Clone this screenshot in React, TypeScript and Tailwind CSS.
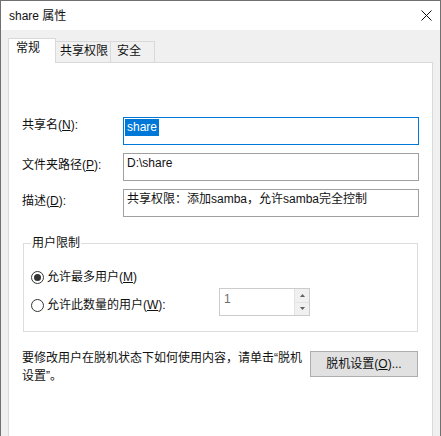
const Key = ({ k }: { k: string }) => <span className="underline underline-offset-1">{k}</span>;

const Radio = ({ checked }: { checked?: boolean }) => (
  <span className="w-[13px] h-[13px] shrink-0 rounded-full border border-[#333333] bg-white flex items-center justify-center">
    {checked && <span className="w-[7px] h-[7px] rounded-full bg-[#333333]" />}
  </span>
);

const Field = ({ children, focused }: { children: React.ReactNode; focused?: boolean }) => (
  <div
    className={`h-[28px] border bg-white pl-[1px] pt-[1px] whitespace-nowrap overflow-hidden ${
      focused ? "border-[#0078d7]" : "border-[#a0a0a0]"
    }`}
  >
    {children}
  </div>
);

const App = () => {
  return (
    <div className="w-[441px] h-[436px] overflow-hidden border-x border-t border-[#707070] bg-[#f0f0f0] flex flex-col text-[12px] leading-4 text-[#111] font-[Liberation_Sans,Noto_Sans_CJK_SC,sans-serif]">
      <div className="h-[29px] shrink-0 bg-white flex items-center justify-between pl-[8px] pr-[8px]">
        <span>share 属性</span>
        <svg width="11" height="11" viewBox="0 0 11 11">
          <path d="M0.5 0.5L10.5 10.5M10.5 0.5L0.5 10.5" stroke="#111" strokeWidth="1" />
        </svg>
      </div>

      <div className="flex-1 min-h-0 flex flex-col px-[7px] pt-[8px]">
        <div className="flex items-end h-[24px] shrink-0">
          <div className="relative z-10 -mb-px h-[25px] w-[48px] bg-white border-x border-t border-[#d9d9d9] pl-[7px] pt-[1px]">
            常规
          </div>
          <div className="h-[21px] w-[55px] border-t border-r border-[#d9d9d9] pl-[4px] pt-[1px]">共享权限</div>
          <div className="h-[21px] w-[44px] border-t border-r border-[#d9d9d9] pl-[6px] pt-[1px]">安全</div>
        </div>

        <div className="flex-1 bg-white border-x border-t border-[#d9d9d9] px-[13px] pt-[54px]">
          <div className="grid grid-cols-[101px_1fr] gap-y-[8px]">
            <div className="pt-0">
              共享名(<Key k="N" />):
            </div>
            <Field focused>
              <span className="inline-block px-[2px] leading-[17px] bg-[#0078d7] text-white">share</span>
            </Field>

            <div className="pt-[4px]">
              文件夹路径(<Key k="P" />):
            </div>
            <Field>
              <span className="inline-block px-[2px] leading-[17px]">D:\share</span>
            </Field>

            <div className="pt-[4px]">
              描述(<Key k="D" />):
            </div>
            <Field>
              <span className="inline-block px-[2px] leading-[17px]">共享权限：添加samba，允许samba完全控制</span>
            </Field>
          </div>

          <fieldset className="mt-[18px] mx-px border border-[#dcdcdc] px-[7px] pb-[15px]">
            <legend className="px-[1px] leading-4">用户限制</legend>
            <div className="mt-[18px] h-[16px] flex items-center gap-[3px]">
              <Radio checked />
              <span>
                允许最多用户(<Key k="M" />)
              </span>
            </div>
            <div className="mt-[3px] flex">
              <div className="w-[188px] pt-[9px]">
                <div className="h-[16px] flex items-center gap-[3px]">
                  <Radio />
                  <span>
                    允许此数量的用户(<Key k="W" />):
                  </span>
                </div>
              </div>
              <div className="w-[91px] h-[28px] border border-[#cccccc] flex">
                <div className="flex-1 pl-[4px] pt-[2px] text-[#6d6d6d]">1</div>
                <div className="w-[15px] flex flex-col border-l border-[#e3e3e3]">
                  <div className="flex-1 bg-[#f0f0f0] flex items-center justify-center border-b border-[#e3e3e3]">
                    <svg width="5" height="3" viewBox="0 0 5 3">
                      <path d="M2.5 0L5 3H0Z" fill="#606060" />
                    </svg>
                  </div>
                  <div className="flex-1 bg-[#f0f0f0] flex items-center justify-center">
                    <svg width="5" height="3" viewBox="0 0 5 3">
                      <path d="M0 0H5L2.5 3Z" fill="#606060" />
                    </svg>
                  </div>
                </div>
              </div>
            </div>
          </fieldset>

          <div className="mt-[17px] flex items-start justify-between">
            <p className="leading-[18px] whitespace-nowrap">
              要修改用户在脱机状态下如何使用内容，请单击“脱机
              <br />
              设置”。
            </p>
            <button
              type="button"
              className="mt-[2px] mr-px w-[108px] h-[26px] shrink-0 bg-[#e1e1e1] border border-[#adadad] leading-4"
            >
              脱机设置(<Key k="O" />)...
            </button>
          </div>
        </div>
      </div>
    </div>
  );
};

export default App;
